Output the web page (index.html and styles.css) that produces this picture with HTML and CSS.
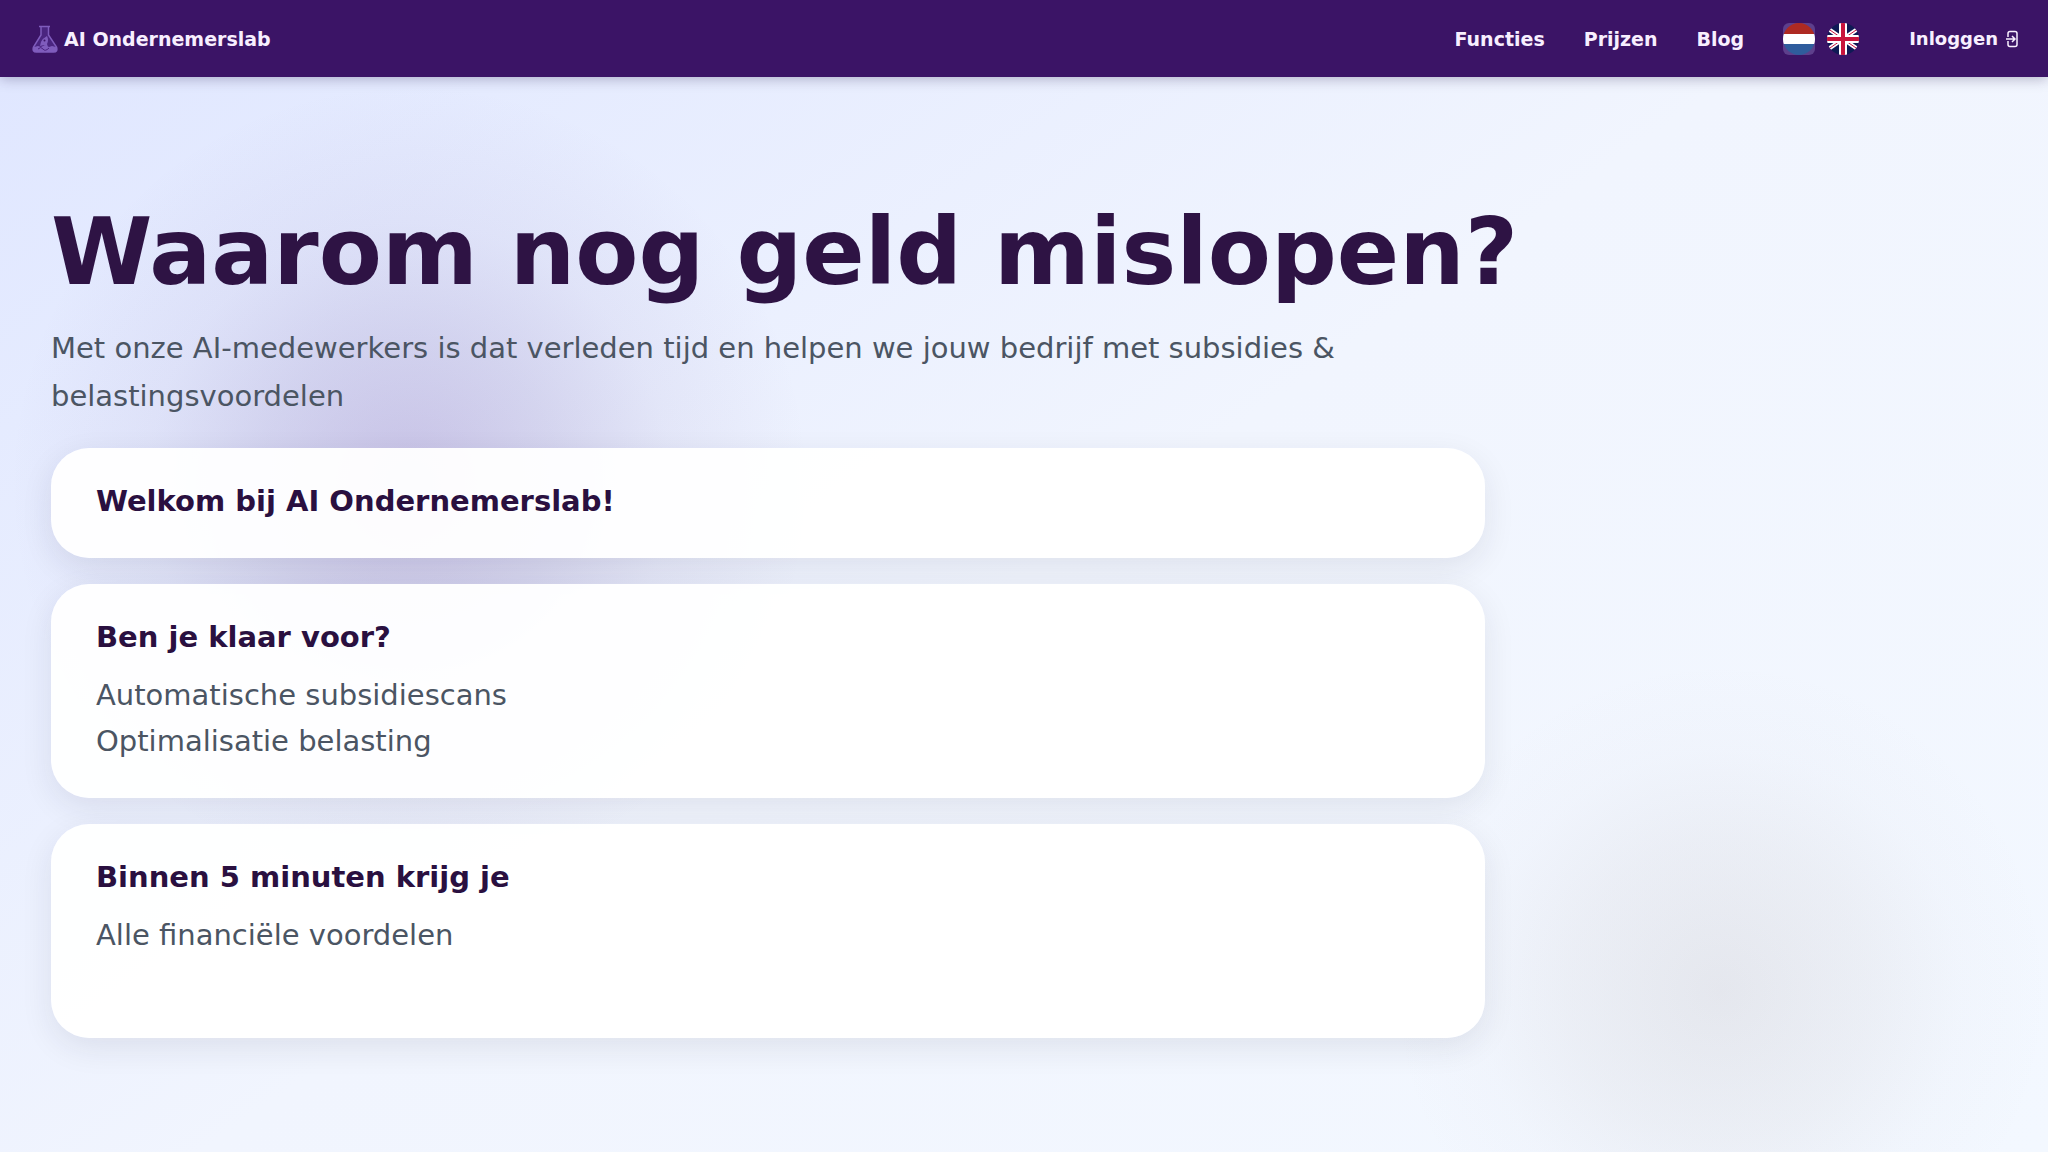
FILE: index.html
```html
<!DOCTYPE html>
<html lang="nl">

<head>
  <meta charset="UTF-8">
  <meta name="viewport" content="width=device-width, initial-scale=1.0">
  <title>AI Ondernemerslab</title>
  <link rel="stylesheet" href="styles.css">
</head>

<body>
  <header class="navbar">
    <a class="brand" href="#">
      <svg class="brand-icon" viewBox="0 0 26 28" aria-hidden="true">
        <path d="M7 1.5h11M9 2v8L1.500 22q-1.500 5 3 5h17q4.500 0 3-5L16.500 10V2" fill="#4a2580" stroke="#7f5cbc" stroke-width="1.500" />
        <path d="M2 22l4-1 3 1 4-2 4 2 3-1 4 1 1 2q0 3-3 3H4q-3 0-3-3z" fill="#7f5cbc" />
        <path d="M15 11q2 4 0 8l1 3-4-2-4 1 1-4q2-4 6-6z" fill="#7f5cbc" />
        <circle cx="12.500" cy="15.500" r="1" fill="#3b1466" />
        <path d="M6 24q3-3 5 0t6-1" fill="none" stroke="#4b2380" />
      </svg>
      <span>AI Ondernemerslab</span>
    </a>

    <nav class="menu">
      <a href="#functies">Functies</a>
      <a href="#prijzen">Prijzen</a>
      <a href="#blog">Blog</a>
      <div class="languages">
        <button class="flag active" type="button" aria-label="Nederlands">
          <svg viewBox="0 0 32 32" aria-hidden="true">
            <clipPath id="nl"><circle cx="16" cy="16" r="16" /></clipPath>
            <g clip-path="url(#nl)">
              <path d="M0 0h32v11H0z" fill="#ae2a22" />
              <path d="M0 11h32v10H0z" fill="#fff" />
              <path d="M0 21h32v11H0z" fill="#2f5c9c" />
            </g>
          </svg>
        </button>
        <button class="flag" type="button" aria-label="English">
          <svg viewBox="0 0 32 32" aria-hidden="true">
            <clipPath id="uk"><circle cx="16" cy="16" r="16" /></clipPath>
            <g clip-path="url(#uk)">
              <path d="M0 0h32v32H0z" fill="#0f1a55" />
              <path d="M0 5l32 22M32 5L0 27" stroke="#fff" stroke-width="4" />
              <path d="M0 5l32 22M32 5L0 27" stroke="#c8143c" stroke-width="1" />
              <path d="M16 0v32M0 16h32" stroke="#fff" stroke-width="8" />
              <path d="M16 0v32M0 16h32" stroke="#c8143c" stroke-width="4" />
            </g>
          </svg>
        </button>
      </div>
      <a class="login" href="#inloggen">
        Inloggen
        <svg class="login-icon" viewBox="0 0 12 18" aria-hidden="true">
          <path d="M2 7V3.500q0-2 2-2h5q2 0 2 2v11q0 2-2 2H4q-2 0-2-2V11M0 9h9M6 6l3 3-3 3" />
        </svg>
      </a>
    </nav>
  </header>

  <main class="hero">
    <h1>Waarom nog geld mislopen?</h1>
    <p class="subtitle">Met onze AI-medewerkers is dat verleden tijd en helpen we jouw bedrijf met subsidies &amp; belastingsvoordelen</p>

    <section class="card">
      <h2>Welkom bij AI Ondernemerslab!</h2>
    </section>

    <section class="card tall">
      <h2>Ben je klaar voor?</h2>
      <ul>
        <li>Automatische subsidiescans</li>
        <li>Optimalisatie belasting</li>
      </ul>
    </section>

    <section class="card tall">
      <h2>Binnen 5 minuten krijg je</h2>
      <ul>
        <li>Alle financiële voordelen</li>
      </ul>
    </section>
  </main>
</body>

</html>
```
FILE: styles.css
```css
* {
  box-sizing: border-box;
  margin: 0;
  padding: 0;
}

body {
  min-height: 100vh;
  font-family: "DejaVu Sans", sans-serif;
  color: #4b5563;
  background:
    radial-gradient(circle at 20% 42%, rgba(88, 48, 150, 0.24), rgba(88, 60, 150, 0.15) 150px, rgba(88, 60, 150, 0.06) 260px, transparent 400px),
    radial-gradient(circle at 84% 86%, rgba(130, 115, 115, 0.12), rgba(140, 125, 125, 0.07) 150px, rgba(140, 125, 135, 0.02) 240px, transparent 330px),
    linear-gradient(145deg, #dfe6ff 0%, #f1f5fe 50%, #f3f8ff 100%);
}

.navbar {
  display: flex;
  align-items: center;
  justify-content: space-between;
  height: 77px;
  padding: 0 30px 0 32px;
  background: #3b1466;
  box-shadow: 0 2px 12px rgba(40, 30, 80, 0.3);
}

.navbar a {
  color: #f8efff;
  font-size: 19px;
  font-weight: bold;
  text-decoration: none;
}

.brand {
  display: flex;
  align-items: center;
  gap: 6px;
}

.brand-icon {
  width: 26px;
  height: 28px;
}

.menu {
  display: flex;
  align-items: center;
  gap: 39px;
}

.languages {
  display: flex;
  gap: 12px;
}

.flag {
  width: 32px;
  height: 32px;
  border: none;
  border-radius: 6px;
  background: none;
  overflow: hidden;
}

.flag svg {
  display: block;
  width: 100%;
  height: 100%;
}

.flag.active {
  background: #5d3f8c;
}

.navbar .login {
  display: flex;
  align-items: center;
  gap: 8px;
  margin-left: 11px;
  font-size: 18px;
}

.login-icon {
  width: 12px;
  height: 18px;
  fill: none;
  stroke: #f8efff;
  stroke-width: 1.5;
}

.hero {
  padding: 122px 27.5% 88px 51px;
}

h1 {
  color: #2e1344;
  font-size: 92px;
  line-height: 108px;
  white-space: nowrap;
}

.subtitle {
  margin: 17px 0 28px;
  font-size: 29px;
  line-height: 48px;
}

.card {
  min-height: 110px;
  margin-bottom: 26px;
  padding: 32px 45px;
  border-radius: 38px;
  background: rgba(255, 255, 255, 0.95);
  box-shadow: 0 10px 32px rgba(31, 38, 60, 0.09);
}

.card.tall {
  min-height: 214px;
}

h2 {
  color: #2a1040;
  font-size: 29px;
  line-height: 42px;
}

.card ul {
  margin-top: 14px;
  list-style: none;
  font-size: 29px;
  line-height: 46px;
}
```
